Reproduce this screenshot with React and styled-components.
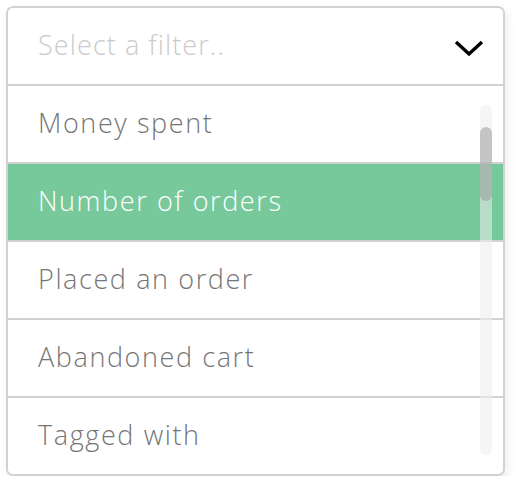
import React from 'react'
import styled, { createGlobalStyle } from 'styled-components'

const GlobalStyle = createGlobalStyle`
  html, body {
    margin: 0;
    padding: 0;
    background: #fff;
  }
  body {
    font-family: "Open Sans", "Liberation Sans", sans-serif;
  }
`

const Page = styled.div`
  padding: 6px 0 0 6px;
`

const Select = styled.div`
  position: relative;
  box-sizing: border-box;
  width: 499px;
  border: 2px solid #d2d2d2;
  border-radius: 7px;
  background: #fff;
  box-shadow: 2px 5px 10px rgba(0, 0, 0, 0.08);
  overflow: hidden;
`

const Header = styled.div`
  display: flex;
  align-items: center;
  justify-content: space-between;
  height: 76px;
  padding: 0 19px 0 30px;
  border-bottom: 2px solid #d2d2d2;
`

const Placeholder = styled.span`
  font-size: 27px;
  font-weight: 300;
  letter-spacing: 1.1px;
  color: #cbcbcb;
  margin-bottom: 4px;
`

const Chevron = styled.svg`
  width: 30px;
  height: 18px;
  margin-top: 4px;
`

const List = styled.ul`
  list-style: none;
  margin: 0;
  padding: 0;
`

const Option = styled.li`
  display: flex;
  align-items: center;
  box-sizing: border-box;
  height: 78px;
  padding: 0 0 4px 30px;
  font-size: 27px;
  font-weight: 300;
  letter-spacing: 1.6px;
  color: ${p => (p.$active ? '#fff' : '#767676')};
  background: ${p => (p.$active ? '#77c99c' : '#fff')};
  border-bottom: 2px solid #d2d2d2;
  &:last-child {
    height: 76px;
    border-bottom: none;
  }
`

const Track = styled.div`
  position: absolute;
  top: 97px;
  right: 11px;
  width: 12px;
  height: 350px;
  border-radius: 6px;
  background: rgba(236, 236, 236, 0.55);
`

const Thumb = styled.div`
  margin-top: 22px;
  width: 12px;
  height: 74px;
  border-radius: 6px;
  background: rgba(150, 150, 150, 0.5);
`

const options = [
  'Money spent',
  'Number of orders',
  'Placed an order',
  'Abandoned cart',
  'Tagged with',
]

export default function App() {
  return (
    <Page>
      <GlobalStyle />
      <Select>
        <Header>
          <Placeholder>Select a filter..</Placeholder>
          <Chevron viewBox="0 0 30 18">
            <path d="M2 3 L15 15 L28 3" fill="none" stroke="#000" strokeWidth="3.4" />
          </Chevron>
        </Header>
        <List>
          {options.map((o, i) => (
            <Option key={o} $active={i === 1}>{o}</Option>
          ))}
        </List>
        <Track>
          <Thumb />
        </Track>
      </Select>
    </Page>
  )
}
